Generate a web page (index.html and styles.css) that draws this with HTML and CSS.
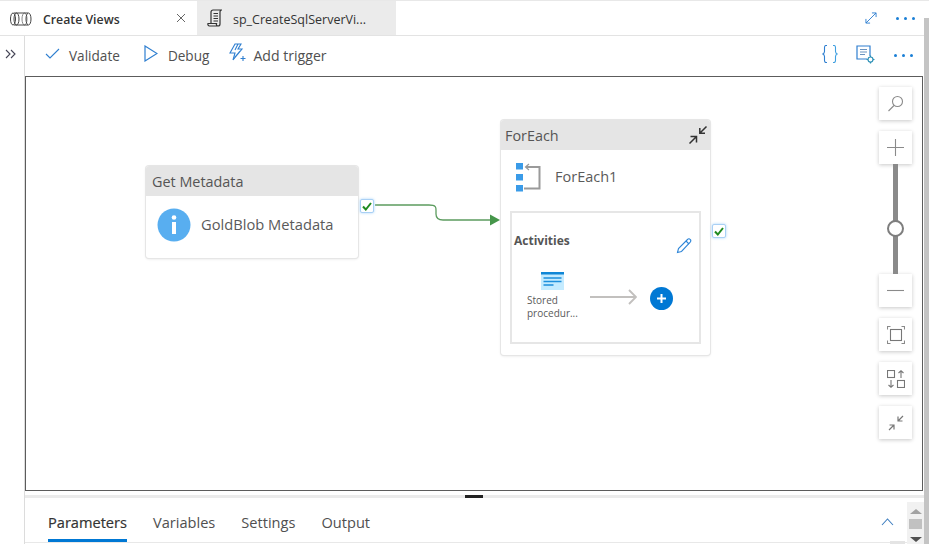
FILE: index.html
```html
<!DOCTYPE html>
<html lang="en">
<head>
<meta charset="utf-8">
<title>Create Views</title>
<link rel="stylesheet" href="styles.css">
</head>
<body>
<div class="page">
  <header class="tabbar">
    <div class="tab tab-active">
      <svg class="tab-icon" width="22" height="14" viewBox="0 0 22 14" fill="none" stroke="#444" stroke-width="1"><ellipse cx="3" cy="7" rx="2.500" ry="6"/><ellipse cx="6.500" cy="7" rx="2.500" ry="6"/><ellipse cx="14.500" cy="7" rx="2.500" ry="6" stroke="#888"/><ellipse cx="18.500" cy="7" rx="2.500" ry="6"/><path d="M4 1h14M4 13h14"/></svg>
      <span class="tab-title">Create Views</span>
      <svg class="tab-close" width="10" height="10" viewBox="0 0 10 10" stroke="#666" stroke-width="1"><path d="M1 1l8 8M9 1l-8 8"/></svg>
    </div>
    <div class="tab tab-other">
      <svg class="tab-icon2" width="16" height="18" viewBox="0 0 16 18" fill="none" stroke="#333" stroke-width="1.200"><path d="M4 14.500V3a2 2 0 0 1 2-2h9a2 2 0 0 0-2 2v12a2 2 0 0 1-2 2H2.500a1.800 1.800 0 0 1-1.500-2.500h8.500a1.800 1.800 0 0 0 1.500 2.500"/><path d="M6.500 4.500h4.500M6.500 7h4.500M6.500 9.500h4.500M6.500 12h4.500"/></svg>
      <span class="tab-title2">sp_CreateSqlServerVi...</span>
    </div>
    <div class="tabbar-actions">
      <svg width="12" height="12" viewBox="0 0 13 13" fill="none" stroke="#2f7fd0" stroke-width="1"><path d="M1 12L12 1M7.500 1H12v4.500M1 7.500V12h4.500"/></svg>
      <div class="dots"><i></i><i></i><i></i></div>
    </div>
  </header>

  <div class="body">
    <aside class="sidebar">
      <svg class="expand" width="11" height="10" viewBox="0 0 11 10" fill="none" stroke="#445" stroke-width="1.100"><path d="M1 1l4 4-4 4M6 1l4 4-4 4"/></svg>
    </aside>

    <main class="content">
      <div class="toolbar">
        <div class="tool tool-validate">
          <svg width="15" height="11" viewBox="0 0 15 11" fill="none" stroke="#2f7fd0" stroke-width="1.100"><path d="M1 6l4 4 9-9"/></svg>
          <span>Validate</span>
        </div>
        <div class="tool tool-debug">
          <svg width="14" height="17" viewBox="0 0 14 17" fill="none" stroke="#2f7fd0" stroke-width="1.200"><path d="M1 1l12 7.500L1 16z"/></svg>
          <span>Debug</span>
        </div>
        <div class="tool tool-trigger">
          <svg width="18" height="20" viewBox="0 0 18 20" fill="none" stroke="#2f7fd0" stroke-width="1.100"><path d="M6 1h6L9 6h4L4 17l2-7H1zM9 1L6 7M11 8L6 14"/><path d="M14 13v5M11.500 15.500h5"/></svg>
          <span>Add trigger</span>
        </div>
        <div class="toolbar-right">
          <svg class="braces" width="16" height="18" viewBox="0 0 16 18" fill="none" stroke="#2f7fd0" stroke-width="1.100"><path d="M5 .5H4C2.800.5 2.500 1.300 2.500 2.500v4C2.500 8 1.800 8.700.5 9c1.300.3 2 1 2 2.500v4c0 1.200.3 2 1.500 2h1"/><path d="M11 .5h1c1.200 0 1.500.8 1.500 2v4c0 1.500.7 2.200 2 2.500-1.300.3-2 1-2 2.500v4c0 1.200-.3 2-1.500 2h-1" stroke="#3f9fe0"/></svg>
          <svg class="gear" width="19" height="19" viewBox="0 0 19 19" fill="none" stroke="#2f7fd0" stroke-width="1.200"><path d="M11 14H1V1h13v10"/><path d="M4 4.500h7M4 7h7M4 9.500h5" stroke="#6a93c0"/><circle cx="14.500" cy="14.500" r="2.500" stroke="#2a8fb5"/><path d="M14.500 10.500v1.500M14.500 17v1.500M10.500 14.500h1.500M17 14.500h1.500" stroke="#2a8fb5"/></svg>
          <div class="dots"><i></i><i></i><i></i></div>
        </div>
      </div>

      <section class="canvas">
        <svg class="link" width="160" height="40" viewBox="0 0 160 40" fill="none"><path d="M0 8H54C62 8 61 11 61 15V17C61 21 63 23 68 23H116" stroke="#5c9c5f" stroke-width="1.300"/><path d="M115 17.500L125 23l-10 5.500z" fill="#45964a"/></svg>

        <article class="node node-meta">
          <div class="node-head">Get Metadata</div>
          <div class="node-body">
            <svg width="34" height="34" viewBox="0 0 34 34"><circle cx="17" cy="17" r="16.500" fill="#58aef0"/><circle cx="17" cy="9.500" r="2.300" fill="#fff"/><rect x="15" y="14" width="4" height="12" fill="#fff"/></svg>
            <span class="node-name">GoldBlob Metadata</span>
          </div>
        </article>
        <div class="check check-meta"><svg width="10" height="9" viewBox="0 0 10 9" fill="none" stroke="#1f8a1f" stroke-width="2"><path d="M1 4.500l2.800 3L9 1"/></svg></div>

        <article class="node node-each">
          <div class="node-head node-head-each">
            <span>ForEach</span>
            <svg width="20" height="20" viewBox="0 0 20 20" fill="none" stroke="#333" stroke-width="1.500"><path d="M1.500 18.500L8 12M2.500 11.500H8.500V17.500" /><path d="M18.500 1.500L12 8M11.800 3V8.200H17" /></svg>
          </div>
          <div class="each-title">
            <svg width="25" height="29" viewBox="0 0 25 29" fill="none"><rect x="0" y="0" width="7" height="6.500" fill="#3a9be8"/><rect x="0" y="11" width="7" height="6.500" fill="#3a9be8"/><rect x="0" y="22" width="7" height="6.500" fill="#3a9be8"/><path d="M10 4h13.500v21.500H8" stroke="#9a9a9a" stroke-width="2"/><path d="M13 1l-3.500 3L13 7" stroke="#9a9a9a" stroke-width="1.200"/></svg>
            <span class="node-name">ForEach1</span>
          </div>
          <div class="activities">
            <div class="act-head">
              <strong>Activities</strong>
              <svg width="16" height="16" viewBox="0 0 16 16" fill="none" stroke="#2f86d8" stroke-width="1.100"><path d="M1.500 14.500l1-4L11.500 1.500c1-1 2-.8 2.700 0 .8.800.8 1.800 0 2.700L5.500 13.500z"/><path d="M10 3l3 3"/></svg>
            </div>
            <div class="act-row">
              <div class="proc">
                <svg width="23" height="18" viewBox="0 0 23 18"><rect x="0" y="0" width="23" height="18" fill="#c4ebff"/><rect x="0" y="0" width="23" height="2.500" fill="#0f86d6"/><path d="M2.500 6h18M2.500 9.500h18M2.500 13h10" stroke="#1d8fdc" stroke-width="1.300"/></svg>
                <span class="proc-name">Stored<br>procedur...</span>
              </div>
              <svg class="act-arrow" width="47" height="16" viewBox="0 0 47 16" fill="none" stroke="#c2c0be" stroke-width="1.900"><path d="M0 8h45M39 1l7 7-7 7"/></svg>
              <svg class="act-add" width="23" height="23" viewBox="0 0 23 23"><circle cx="11.500" cy="11.500" r="11.500" fill="#0078d4"/><path d="M11.500 7v9M7 11.500h9" stroke="#fff" stroke-width="2"/></svg>
            </div>
          </div>
        </article>
        <div class="check check-each"><svg width="10" height="9" viewBox="0 0 10 9" fill="none" stroke="#1f8a1f" stroke-width="2"><path d="M1 4.500l2.800 3L9 1"/></svg></div>

        <nav class="zoom">
          <button class="zbtn z-search"><svg width="17" height="17" viewBox="0 0 17 17" fill="none" stroke="#8a8a8a" stroke-width="1.100"><circle cx="10.500" cy="6.500" r="5"/><path d="M7 10.500L1.500 16"/></svg></button>
          <button class="zbtn z-plus"><svg width="17" height="17" viewBox="0 0 17 17" stroke="#8a8a8a" stroke-width="1.100"><path d="M8.500 0v17M0 8.500h17"/></svg></button>
          <div class="slider"><span class="knob"></span></div>
          <button class="zbtn"><svg width="17" height="17" viewBox="0 0 17 17" stroke="#8a8a8a" stroke-width="1.100"><path d="M0 8.500h17"/></svg></button>
          <button class="zbtn z-gap"><svg width="18" height="18" viewBox="0 0 18 18" fill="none" stroke="#777" stroke-width="1.100"><rect x="3.500" y="3.500" width="11" height="11"/><path d="M.5 3.500v-3h3M14.500.5h3v3M.5 14.500v3h3M14.500 17.500h3v-3" stroke="#8a8a8a"/></svg></button>
          <button class="zbtn z-gap"><svg width="18" height="18" viewBox="0 0 18 18" fill="none" stroke="#777" stroke-width="1.100"><rect x=".5" y=".5" width="7" height="7"/><rect x="10.500" y="10.500" width="7" height="7"/><path d="M14 8V1M11.500 3L14 .8 16.500 3M4 10v7M1.500 15L4 17.200 6.500 15"/></svg></button>
          <button class="zbtn z-gap"><svg width="16" height="16" viewBox="0 0 16 16" fill="none" stroke="#777" stroke-width="1.200"><path d="M1 15l5-5M1.500 10H6v4.500"/><path d="M15 1L10 6M10 1.500V6h4.500"/></svg></button>
        </nav>
      </section>

      <div class="splitter"><span class="grip"></span></div>

      <div class="panel">
        <ul class="panel-tabs">
          <li class="ptab ptab-on">Parameters</li>
          <li class="ptab">Variables</li>
          <li class="ptab">Settings</li>
          <li class="ptab">Output</li>
        </ul>
        <svg class="chev" width="13" height="8" viewBox="0 0 13 8" fill="none" stroke="#3f7fc0" stroke-width="1.100"><path d="M1 7l5.500-6L12 7"/></svg>
      </div>
    </main>
  </div>

  <div class="pagebar"></div>
  <div class="minibar">
    <span class="up"></span>
    <span class="thumb"></span>
    <span class="down"></span>
  </div>
  <div class="peek"></div>
</div>
</body>
</html>
```

FILE: styles.css
```css
* { box-sizing: border-box; }
html, body { margin: 0; height: 100%; }
body { background: #fff; font-family: "Open Sans", "Noto Sans", sans-serif; color: #555; overflow: hidden; }
.page { position: relative; width: 929px; height: 544px; display: flex; flex-direction: column; overflow: hidden; }

.tabbar { height: 36px; flex: none; display: flex; border-top: 1px solid #e8e8e8; border-bottom: 1px solid #e3e3e3; padding-right: 14px; }
.tab { height: 34px; width: 197px; display: flex; align-items: center; }
.tab-active { padding-left: 10px; }
.tab-other { width: 199px; background: #ebebeb; padding-left: 10px; }
.tab-icon { flex: none; margin-top: 2px; }
.tab-title { margin: 2px 0 0 11px; font-size: 12.300px; font-weight: 600; color: #333; width: 133px; }
.tab-close { flex: none; }
.tab-title2 { margin: 2px 0 0 10px; font-size: 12.500px; color: #333; }
.tabbar-actions { margin-left: auto; display: flex; align-items: center; gap: 19px; height: 34px; }
.dots { display: flex; gap: 5px; align-items: center; }
.dots i { display: block; width: 3px; height: 3px; border-radius: 50%; background: #1a7fd6; }

.body { flex: 1; display: flex; min-height: 0; }
.sidebar { width: 25px; flex: none; border-right: 1px solid #dcdcdc; padding: 13px 0 0 5px; }
.expand { display: block; }
.content { flex: 1; min-width: 0; display: flex; flex-direction: column; padding-right: 6px; }

.toolbar { height: 40px; flex: none; display: flex; align-items: center; padding: 0 0 2px 20px; font-size: 13.600px; color: #505050; }
.tool { display: flex; align-items: center; }
.tool svg { margin-bottom: 4px; }
.tool-validate { gap: 9px; }
.tool-debug { gap: 10px; margin-left: 24px; }
.tool-trigger { gap: 6px; margin-left: 20px; font-size: 14.100px; }
.toolbar-right { margin-left: auto; display: flex; align-items: center; padding-right: 10px; gap: 18px; }
.toolbar-right .dots { margin-left: 1px; }
.braces, .gear { margin-bottom: 2px; }

.canvas { position: relative; height: 415px; flex: none; border: 1px solid #5c5c5c; background: #fff; }
.node { position: absolute; background: #fff; border-radius: 3px; box-shadow: 0 0 0 1px #e6e6e6, 0 1px 3px rgba(0,0,0,.12); }
.node-head { height: 30px; background: #e5e5e5; font-size: 14.400px; color: #555; display: flex; align-items: center; padding-left: 6px; border-radius: 3px 3px 0 0; }
.node-head-each { justify-content: space-between; padding: 0 2px 0 4px; }
.node-name { font-size: 14.700px; color: #5a5a5a; margin-top: -2px; }

.node-meta { left: 120px; top: 89px; width: 212px; height: 92px; }
.node-body { display: flex; align-items: center; gap: 10px; padding: 12px 0 0 11px; }

.node-each { left: 475px; top: 43px; width: 209px; height: 235px; }
.each-title { display: flex; align-items: center; gap: 14px; height: 55px; padding: 0 0 0 15px; }
.each-title .node-name { font-size: 14.500px; }
.activities { margin: 6px 9px 0; height: 133px; border: 2px solid #e6e6e6; padding: 0 0 0 2px; }
.act-head { display: flex; justify-content: space-between; align-items: center; padding: 16px 7px 0 0; }
.act-head strong { font-size: 12px; font-weight: 700; color: #555; line-height: 17px; margin-top: -2px; }
.act-head svg { margin-top: 9px; }
.act-row { display: flex; align-items: center; margin-top: 18px; padding-left: 13px; }
.proc { width: 63px; display: flex; flex-direction: column; }
.proc svg { margin-left: 14px; }
.proc-name { font-size: 10px; line-height: 13px; color: #5a5a5a; margin-top: 4px; white-space: nowrap; }
.act-arrow { margin-top: 1px; }
.act-add { margin: 5px 0 0 13px; }

.check { position: absolute; width: 14px; height: 14px; background: #fff; border: 1px solid #a9d0f5; border-radius: 2px; box-shadow: 0 0 3px #a8d4fa; display: flex; align-items: center; justify-content: center; }
.check-meta { left: 334px; top: 122px; }
.check-each { left: 686px; top: 147px; }
.link { position: absolute; left: 349px; top: 120px; }

.zoom { position: absolute; left: 853px; top: 10px; width: 33px; display: flex; flex-direction: column; align-items: center; }
.zbtn { width: 33px; height: 33px; padding: 0; border: 0; background: #fff; box-shadow: 0 1px 4px rgba(0,0,0,.22); display: flex; align-items: center; justify-content: center; }
.z-plus { margin-top: 11px; }
.z-gap { margin-top: 11px; }
.slider { position: relative; width: 5px; height: 110px; background: #8a8a8a; z-index: 1; }
.knob { position: absolute; left: -6px; top: 56px; width: 17px; height: 17px; border-radius: 50%; background: #fff; border: 2px solid #7e7e7e; }

.splitter { height: 7px; flex: none; position: relative; }
.splitter::after { content: ""; position: absolute; left: 0; right: -1px; top: 4px; height: 3px; background: #ebebeb; }
.grip { position: absolute; left: 440px; top: 4px; width: 18px; height: 3px; background: #222; z-index: 1; }

.panel { flex: 1; position: relative; }
.panel-tabs { list-style: none; margin: 0 0 0 23px; padding: 0; display: flex; gap: 26px; height: 44px; }
.ptab { font-size: 14.600px; color: #505050; height: 44px; line-height: 48px; }
.ptab-on { position: relative; color: #333; -webkit-text-stroke: .2px #333; }
.ptab-on::after { content: ""; position: absolute; left: 0; right: 0; top: 41px; height: 3px; background: #0078d4; }
.panel::after { content: ""; position: absolute; left: 0; right: 0; top: 44px; height: 1px; background: #e8e8e8; }
.chev { position: absolute; left: 856px; top: 20px; }

.pagebar { position: absolute; right: 0; top: 18px; bottom: 0; width: 5px; background: #c4c4c4; }
.minibar { position: absolute; left: 907px; top: 502px; width: 17px; height: 42px; background: #f1f1f1; display: flex; flex-direction: column; align-items: center; }
.up { width: 0; height: 0; margin-top: 7px; border: 6px solid transparent; border-top: 0; border-bottom: 5px solid #a3a3a3; }
.thumb { width: 13px; height: 10px; margin-top: 5px; background: #c1c1c1; }
.down { width: 0; height: 0; margin-top: 8px; border: 6px solid transparent; border-bottom: 0; border-top: 5px solid #505050; }
.peek { position: absolute; left: 890px; top: 541px; width: 15px; height: 3px; background: #e4e4e4; }
```
